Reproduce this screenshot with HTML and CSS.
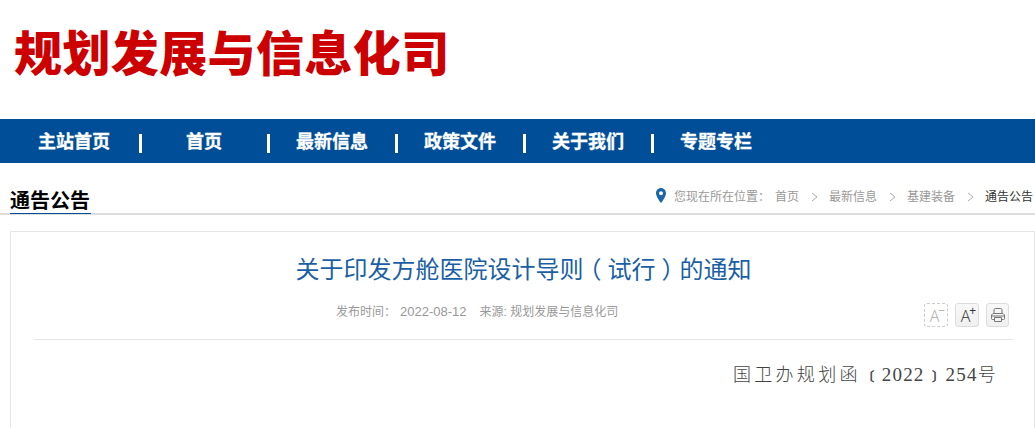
FILE: index.html
```html
<!DOCTYPE html>
<html lang="zh-CN">
<head>
<meta charset="utf-8">
<title>关于印发方舱医院设计导则（试行）的通知</title>
<link rel="stylesheet" href="styles.css">
</head>
<body>
<header class="brand"><h1 class="brand-name">规划发展与信息化司</h1></header>
<nav class="nav">
  <a class="nav-item nav-first" href="#">主站首页</a>
  <a class="nav-item" href="#">首页</a>
  <a class="nav-item" href="#">最新信息</a>
  <a class="nav-item" href="#">政策文件</a>
  <a class="nav-item" href="#">关于我们</a>
  <a class="nav-item nav-last" href="#">专题专栏</a>
</nav>
<section class="section-head">
  <h2 class="section-title">通告公告</h2>
  <div class="crumbs">
    <svg class="pin" width="10" height="15" viewBox="0 0 10 15"><path fill="#1a66a8" fill-rule="evenodd" d="M5 0C2.200 0 0 2.300 0 5.200 0 8.900 5 15 5 15s5-6.100 5-9.800C10 2.300 7.800 0 5 0zm0 3.200a2 2 0 1 1 0 4 2 2 0 0 1 0-4z"/></svg>
    <span class="crumb-label">您现在所在位置：</span>
    <a class="crumb" href="#">首页</a><svg class="chev" width="7" height="10" viewBox="0 0 7 10"><path d="M1 1l5 4-5 4" fill="none" stroke="#aaa"/></svg>
    <a class="crumb" href="#">最新信息</a><svg class="chev" width="7" height="10" viewBox="0 0 7 10"><path d="M1 1l5 4-5 4" fill="none" stroke="#aaa"/></svg>
    <a class="crumb" href="#">基建装备</a><svg class="chev" width="7" height="10" viewBox="0 0 7 10"><path d="M1 1l5 4-5 4" fill="none" stroke="#aaa"/></svg>
    <span class="crumb-current">通告公告</span>
  </div>
</section>
<article class="card">
  <h3 class="article-title">关于印发方舱医院设计导则<span class="paren">（</span>试行<span class="paren">）</span>的通知</h3>
  <div class="meta-row">
    <div class="meta"><span>发布时间：</span><span class="meta-date">2022-08-12</span><span class="meta-source">来源: 规划发展与信息化司</span></div>
    <div class="tools">
      <button class="tool tool-off"><span class="tool-a">A</span><span class="tool-sign">−</span></button>
      <button class="tool"><span class="tool-a">A</span><span class="tool-sign">+</span></button>
      <button class="tool tool-print"><svg width="14" height="14" viewBox="0 0 14 14" fill="none" stroke="#777"><path d="M3 5.500V2q0-1.500 1.500-1.500h5Q11 .5 11 2v3.500M3 11.500H1.500q-1 0-1-1V7l1.500-1.500h10L13.500 7v3.500q0 1-1 1H11M.5 8h13M3.500 9.500h7v4h-7z"/></svg></button>
    </div>
  </div>
  <p class="doc-no">国卫办规划函<span class="doc-b">〔</span><span class="doc-num">2022</span><span class="doc-b">〕</span><span class="doc-num">254</span>号</p>
</article>
</body>
</html>
```
FILE: styles.css
```css
html { overflow: hidden; }
body { margin: 0; background: #fff; font-family: "Liberation Sans", "Noto Sans CJK SC", sans-serif; }
a { color: inherit; text-decoration: none; }
.brand { height: 119px; box-sizing: border-box; padding: 27px 0 0 14px; }
.brand-name { margin: 0; font-size: 48px; line-height: 56px; font-weight: 900; color: #cc0000; letter-spacing: 0.4px; }
.nav { height: 44px; background: #004e98; display: flex; padding-left: 11px; }
.nav-item { position: relative; box-sizing: border-box; width: 128px; flex: none; padding-right: 4px; text-align: center; font-size: 18px; font-weight: 700; line-height: 46px; color: #fff; -webkit-text-stroke: 0.3px #fff; }
.nav-first { width: 131px; padding-right: 5px; }
.nav-item::after { content: ""; position: absolute; right: 0; top: 15px; width: 3px; height: 19px; background: #fff; }
.nav-last::after { display: none; }
.section-head { display: flex; justify-content: space-between; align-items: flex-end; height: 52px; box-sizing: border-box; padding: 0 2px 0 10px; border-bottom: 2px solid #ddd; }
.section-title { box-sizing: content-box; width: 81px; margin: 0 0 -1px; font-size: 20px; line-height: 29px; font-weight: 700; color: #000; border-bottom: 1px solid #004e98; height: 26px; }
.crumbs { display: flex; align-items: center; font-size: 12px; line-height: 18px; color: #999; height: 38px; padding-top: 6px; box-sizing: border-box; }
.pin { margin: -3px 8px 0 0; }
.crumb-label { margin-right: 5px; }
.chev { margin: 0 11px 0 12px; }
.crumb-current { color: #333; }
.card { margin: 16px 0 0 10px; border: 1px solid #e6e6e6; height: 300px; padding: 0 21px 0 23px; }
.article-title { margin: 20px 0 0; font-size: 24px; line-height: 36px; font-weight: 400; color: #1a5fa5; text-align: center; }
.paren { display: inline-block; width: 1em; text-align: center; font-feature-settings: "halt"; }
.meta-row { position: relative; margin-top: 14px; height: 37px; border-bottom: 1px solid #e6e6e6; }
.meta { padding-left: 302px; font-size: 12px; line-height: 20px; color: #999; }
.meta-date { margin-left: 4px; font-size: 13px; }
.meta-source { margin-left: 13px; }
.tools { position: absolute; right: 4px; top: 1px; display: flex; gap: 7px; }
.tool { position: relative; box-sizing: border-box; width: 24px; height: 24px; padding: 0; border: 1px solid #ddd; border-radius: 3px; background: linear-gradient(#f8f8f8, #efefef); display: flex; align-items: center; justify-content: center; }
.tool-print { width: 23px; }
.tool-off { border: 1px dashed #ccc; background: #fff; }
.tool-a { font-family: "Open Sans", sans-serif; font-weight: 300; font-size: 16px; line-height: 16px; color: #333; margin: 2px 3px 0 0; }
.tool-off .tool-a, .tool-off .tool-sign { color: #aaa; }
.tool-sign { position: absolute; right: 2px; top: 2px; font-family: "Open Sans", sans-serif; font-size: 12px; line-height: 10px; color: #333; }
.doc-no { margin: 23px 14px 0 0; text-align: right; font-size: 18px; line-height: 24px; letter-spacing: 3.3px; color: #444; font-weight: 300; font-family: "Liberation Serif", "Noto Sans CJK SC", serif; }
.doc-b { display: inline-block; width: 21px; text-align: center; letter-spacing: 0; font-size: 13px; font-weight: 700; font-feature-settings: "halt"; }
.doc-num { font-size: 19px; letter-spacing: 1.2px; }
```
